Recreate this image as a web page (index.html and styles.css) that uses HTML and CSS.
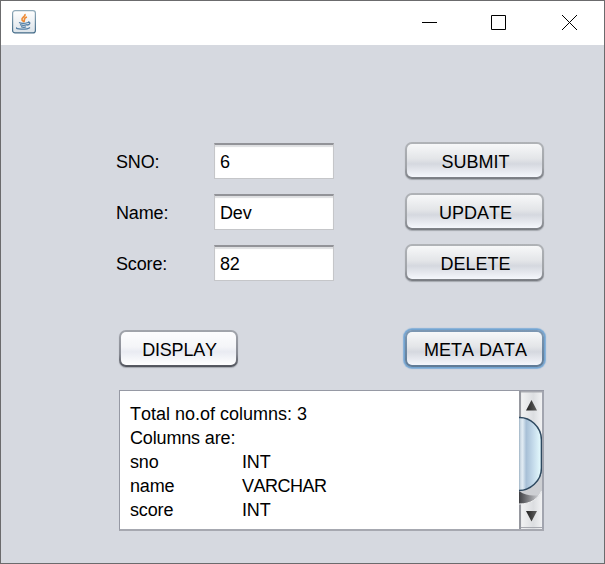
FILE: index.html
```html
<!DOCTYPE html>
<html lang="en">
<head>
<meta charset="utf-8">
<title>Student records</title>
<link rel="stylesheet" href="styles.css">
</head>
<body>
<div class="window">
  <header class="titlebar">
    <svg class="app-icon" width="24" height="24" viewBox="0 0 24 24">
      <defs><linearGradient id="tile" x2="0" y2="1"><stop stop-color="#fff"/><stop offset="1" stop-color="#dce3e9"/></linearGradient>
      <linearGradient id="edge" x2="0" y2="1"><stop stop-color="#91abba"/><stop offset="1" stop-color="#426a87"/></linearGradient></defs>
      <rect x=".6" y=".6" width="22.8" height="22.3" rx="2.5" fill="url(#tile)" stroke="url(#edge)" stroke-width="1.2"/>
      <path d="M13 4c1 3-4 3-3 6l2 2M15 7c-4 1-2 3-3 5" fill="none" stroke="#ee8b35" stroke-width="1.6"/>
      <path d="M7 12.5c2 1 6 1 9 0M16 12c3 0 2 3-1 3M8 14.7c2 .8 5 .8 7 0M9 16.7c2 .7 4 .7 5 0M5 17.500c-3 2 10 2.500 13 0" fill="none" stroke="#527ea5" stroke-width="1.3"/>
    </svg>
    <svg class="controls" width="156" height="17" viewBox="0 0 156 17" fill="none" stroke="#000">
      <path d="M1 8.500h15M70.500 1.500h14v14h-14zM141 1l15 15M156 1l-15 15"/>
    </svg>
  </header>
  <main class="content">
    <form class="record">
      <label>SNO:</label><div class="field">6</div><button type="button">SUBMIT</button>
      <label>Name:</label><div class="field">Dev</div><button type="button">UPDATE</button>
      <label>Score:</label><div class="field">82</div><button type="button">DELETE</button>
    </form>
    <div class="actions">
      <button type="button" class="display">DISPLAY</button>
      <button type="button" class="focused">META DATA</button>
    </div>
    <section class="output">
      <div class="text">
        <p class="total">Total no.of columns: 3</p>
        <p>Columns are:</p>
        <p class="pair"><span>sno</span><span>INT</span></p>
        <p class="pair"><span>name</span><span class="wide">VARCHAR</span></p>
        <p class="pair"><span>score</span><span>INT</span></p>
      </div>
      <svg class="scrollbar" width="25" height="138" viewBox="0 0 25 138">
        <defs>
          <linearGradient id="track"><stop stop-color="#c8cace"/><stop offset=".12" stop-color="#f0f1f2"/><stop offset=".6" stop-color="#dcdee1"/><stop offset="1" stop-color="#f3f4f5"/></linearGradient>
          <linearGradient id="thumb"><stop stop-color="#8099ae"/><stop offset=".12" stop-color="#d3dfe9"/><stop offset=".2" stop-color="#e0ebf3"/><stop offset=".35" stop-color="#a7bfd6"/><stop offset=".65" stop-color="#c5dbeb"/><stop offset=".93" stop-color="#e1f6fb"/><stop offset="1" stop-color="#bbd5df"/></linearGradient>
          <linearGradient id="shade"><stop stop-color="#404145"/><stop offset=".5" stop-color="#85868a"/><stop offset="1" stop-color="#d0d2d6"/></linearGradient>
          <linearGradient id="arrow"><stop stop-color="#222"/><stop offset="1" stop-color="#606060"/></linearGradient>
        </defs>
        <path fill="url(#track)" d="M0 0h24v138H0z"/>
        <path fill="#96989f" d="M0 0h2v138H0z"/>
        <path fill="#cdcfd3" d="M0 84H23V100C20 108 10 113 0 113z"/>
        <path fill="url(#shade)" d="M0 100C7 105 14 105 20 104C16 110 10 113 0 113z"/>
        <path d="M22.500 100C19 108 12 113 0 113" fill="none" stroke="#eff0f1"/>
        <path fill="url(#thumb)" stroke="#2e4960" stroke-width="1.500" d="M-1 26.500C11 25.500 22.500 36 22.500 49V77C22.500 90 11 100 -1 99.500"/>
        <path fill="url(#arrow)" d="M12.500 9l5.500 10.500h-11zM7 120h11l-5.500 10.500z"/>
        <path fill="#a7a9b0" d="M2 0h21v1.500H2zM2 136h21v1H2z"/>
        <path fill="#a2a5af" d="M23 0h2v138h-2z"/>
      </svg>
    </section>
  </main>
</div>
</body>
</html>
```
FILE: styles.css
```css
* { box-sizing: border-box; }
body { margin: 0; font: 18px/24px "Liberation Sans", Arial, sans-serif; font-kerning: none; letter-spacing: -0.15px; color: #000; }
.window { width: 605px; height: 564px; border: 1px solid #6b6b6d; background: #d6d9e0; }
.titlebar { height: 44px; display: flex; justify-content: space-between; background: #fff; padding: 9px 27px 0 11px; }
.controls { margin-top: 4px; }
.content { padding: 97px 59px 0 115px; }
.record { margin: 0; display: grid; grid-template-columns: 98px 120px 139px; grid-template-rows: repeat(3, 38px); row-gap: 13px; justify-content: start; align-items: start; }
.record button { margin-left: 71px; }
label { line-height: 40px; height: 38px; }
.field { width: 120px; height: 36px; margin-top: 1px; padding: 0 5px; line-height: 35px; background: #fff; border: 1px solid #c5c6c9; border-top: 2px solid #929398; box-shadow: inset 0 2px 1px #dedfe1; }
button { width: 139px; height: 37px; padding: 3px 0 0 2px; border: 2px solid transparent; border-radius: 7px; font: inherit; font-kerning: none; letter-spacing: 0; line-height: 30px; color: #000; background: linear-gradient(#f7f8f9, #e3e5e8 45%, #d5d8df 60%, #f5f7fc) padding-box, linear-gradient(#b0b3b7, #a0a3a8 70%, #797c82) border-box; box-shadow: 0 1px 1px #a5a8af; }
.actions { display: flex; justify-content: space-between; width: 425px; margin: 48px 0 0 3px; }
.actions .display { width: 119px; letter-spacing: -0.2px; background: linear-gradient(#fdfdfe, #f4f5f8 45%, #e9ebf2 60%, #fff) padding-box, linear-gradient(#a2a5ac, #888b94 65%, #50535b) border-box; }
.actions .focused { box-shadow: 0 0 0 1px #73a4d1, 0 0 1px 2px #84afd7; background: linear-gradient(#f7f8f9, #e3e5e8 45%, #d5d8df 60%, #f5f7fc) padding-box, linear-gradient(#7d98b3, #607b96) border-box; }
.output { display: flex; width: 425px; height: 141px; margin: 23px 0 0 3px; border: 1px solid #9699a4; border-right: 0; border-bottom: 2px solid #a6a8b0; background: #fff; }
.text { width: 399px; padding: 11px 10px; }
.text p { margin: 0; white-space: nowrap; }
.text .total { letter-spacing: 0; }
.pair { display: grid; grid-template-columns: 112px 1fr; }
.text .wide { letter-spacing: -0.5px; }
.scrollbar { flex: none; }
```
